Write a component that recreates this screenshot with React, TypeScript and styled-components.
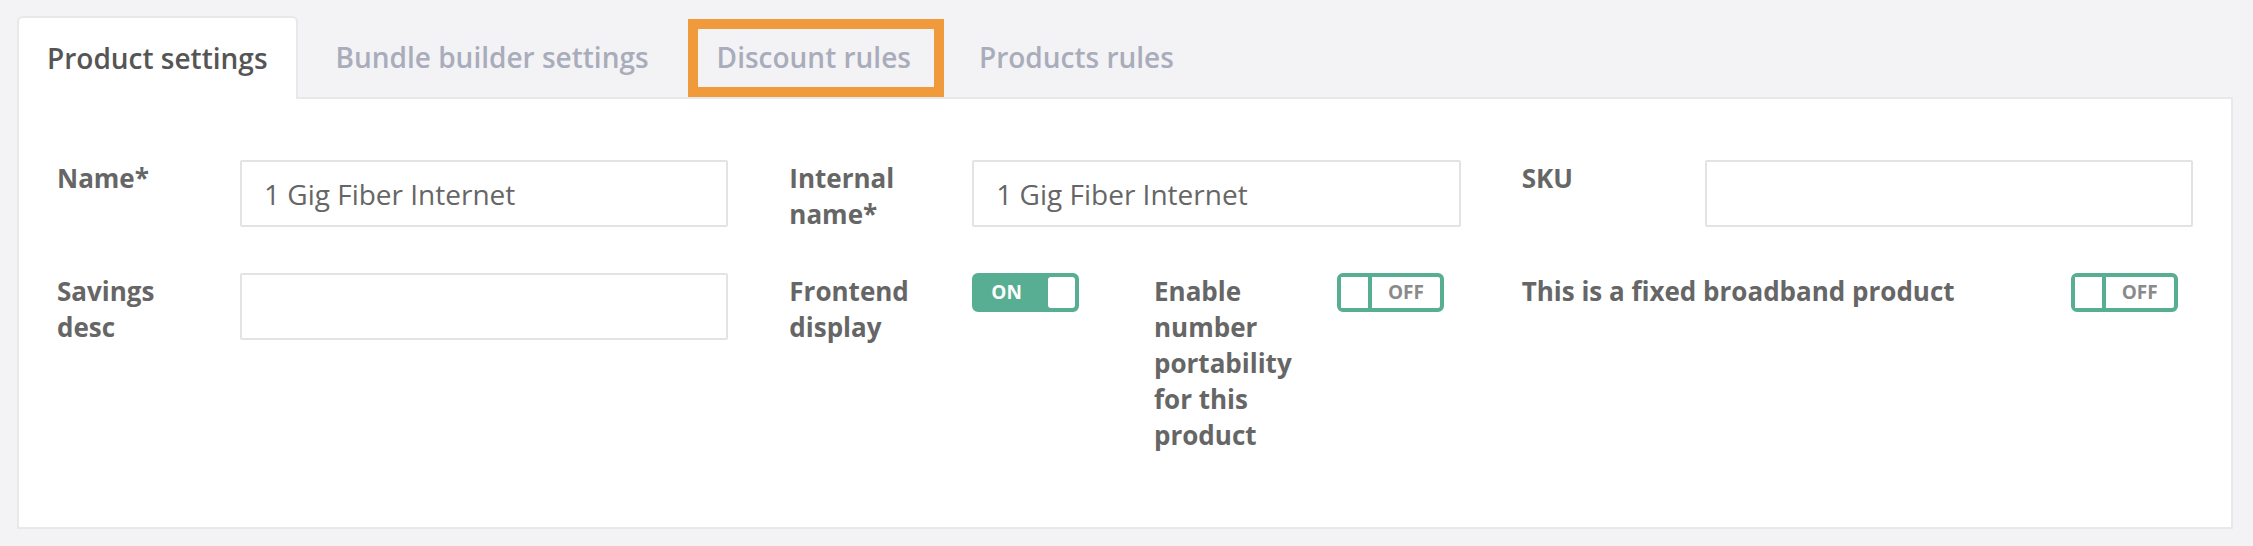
import styled, { createGlobalStyle } from "styled-components";

const GlobalStyle = createGlobalStyle`
  body {
    margin: 0;
    background: #f3f3f6;
    font-family: "Open Sans", "Liberation Sans", sans-serif;
  }
`;

interface ToggleProps {
  on: boolean;
}

const Toggle: React.FC<ToggleProps> = ({ on }) => (
  <Switch $on={on}>
    {on ? (
      <>
        <SwitchText $on>ON</SwitchText>
        <Knob $on />
      </>
    ) : (
      <>
        <Knob $on={false} />
        <SwitchText $on={false}>OFF</SwitchText>
      </>
    )}
  </Switch>
);

const tabs = [
  "Product settings",
  "Bundle builder settings",
  "Discount rules",
  "Products rules",
];

export default function App() {
  return (
    <>
      <GlobalStyle />
      <Page>
        <TabBar>
          {tabs.map((label, index) => (
            <Tab
              key={label}
              $active={index === 0}
              $highlighted={label === "Discount rules"}
            >
              {label}
            </Tab>
          ))}
        </TabBar>
        <Panel>
          <FormGrid>
            <Field>
              <Label>Name*</Label>
              <Input defaultValue="1 Gig Fiber Internet" />
            </Field>
            <Field>
              <Label>Internal name*</Label>
              <Input defaultValue="1 Gig Fiber Internet" />
            </Field>
            <Field>
              <Label>SKU</Label>
              <Input defaultValue="" />
            </Field>

            <Field>
              <Label>Savings desc</Label>
              <Input defaultValue="" />
            </Field>
            <SplitCell>
              <Field>
                <Label>Frontend display</Label>
                <Toggle on />
              </Field>
              <Field>
                <Label>Enable number portability for this product</Label>
                <Toggle on={false} />
              </Field>
            </SplitCell>
            <Field>
              <Label $width={549}>This is a fixed broadband product</Label>
              <Toggle on={false} />
            </Field>
          </FormGrid>
        </Panel>
      </Page>
    </>
  );
}

const Page = styled.div`
  padding: 16px 20px 17px 17px;
`;

const TabBar = styled.div`
  display: flex;
  align-items: flex-end;
  gap: 8px;
  height: 81px;
`;

const Tab = styled.div<{ $active?: boolean; $highlighted?: boolean }>`
  position: relative;
  box-sizing: border-box;
  display: flex;
  align-items: center;
  height: ${({ $active }) => ($active ? "83px" : "81px")};
  margin-bottom: ${({ $active }) => ($active ? "-2px" : "0")};
  padding: 0 28px 2px;
  border: 2px solid ${({ $active }) => ($active ? "#e8e8eb" : "transparent")};
  border-bottom: none;
  border-radius: 6px 6px 0 0;
  background: ${({ $active }) => ($active ? "#ffffff" : "transparent")};
  z-index: ${({ $active }) => ($active ? 1 : 0)};
  color: ${({ $active }) => ($active ? "#555555" : "#a9acba")};
  font-size: 28px;
  font-weight: 600;
  white-space: nowrap;

  ${({ $highlighted }) =>
    $highlighted &&
    `
    &::after {
      content: "";
      position: absolute;
      top: 1px;
      left: -1px;
      right: -5px;
      bottom: 0;
      border: 10px solid #ef9b3b;
    }
  `}
`;

const Panel = styled.div`
  box-sizing: border-box;
  height: 432px;
  padding: 61px 38px 0 38px;
  background: #ffffff;
  border: 2px solid #e8e8eb;
`;

const FormGrid = styled.div`
  display: grid;
  grid-template-columns: repeat(3, 1fr);
  column-gap: 61px;
  row-gap: 41px;
  align-items: start;
`;

const SplitCell = styled.div`
  display: grid;
  grid-template-columns: 1fr 1fr;
  column-gap: 58px;
`;

const Field = styled.div`
  display: flex;
  align-items: flex-start;
`;

const Label = styled.div<{ $width?: number }>`
  flex: 0 0 ${({ $width }) => $width ?? 183}px;
  box-sizing: border-box;
  padding-right: 30px;
  color: #666666;
  font-size: 26px;
  font-weight: 700;
  line-height: 36px;
`;

const Input = styled.input`
  flex: 1;
  min-width: 0;
  box-sizing: border-box;
  height: 67px;
  padding: 0 22px;
  border: 2px solid #e3e3e3;
  border-radius: 2px;
  background: #ffffff;
  color: #666666;
  font-family: "Open Sans", "Liberation Sans", sans-serif;
  font-size: 28px;
  outline: none;
`;

const Switch = styled.div<{ $on: boolean }>`
  box-sizing: border-box;
  display: flex;
  align-items: stretch;
  width: 107px;
  height: 39px;
  border: 4px solid #58ae93;
  border-radius: 6px;
  background: ${({ $on }) => ($on ? "#58ae93" : "#ffffff")};
`;

const SwitchText = styled.span<{ $on: boolean }>`
  display: flex;
  align-items: center;
  justify-content: ${({ $on }) => ($on ? "flex-start" : "center")};
  flex: ${({ $on }) => ($on ? "0 0 auto" : "1")};
  padding-left: ${({ $on }) => ($on ? "15px" : "0")};
  color: ${({ $on }) => ($on ? "#ffffff" : "#8a8a8a")};
  font-size: 19px;
  font-weight: 700;
  line-height: 1;
`;

const Knob = styled.span<{ $on: boolean }>`
  box-sizing: border-box;
  flex: 0 0 ${({ $on }) => ($on ? "27px" : "31px")};
  margin-left: ${({ $on }) => ($on ? "auto" : "0")};
  border-radius: ${({ $on }) => ($on ? "3px" : "0")};
  border-right: ${({ $on }) => ($on ? "none" : "4px solid #58ae93")};
  background: #ffffff;
`;
